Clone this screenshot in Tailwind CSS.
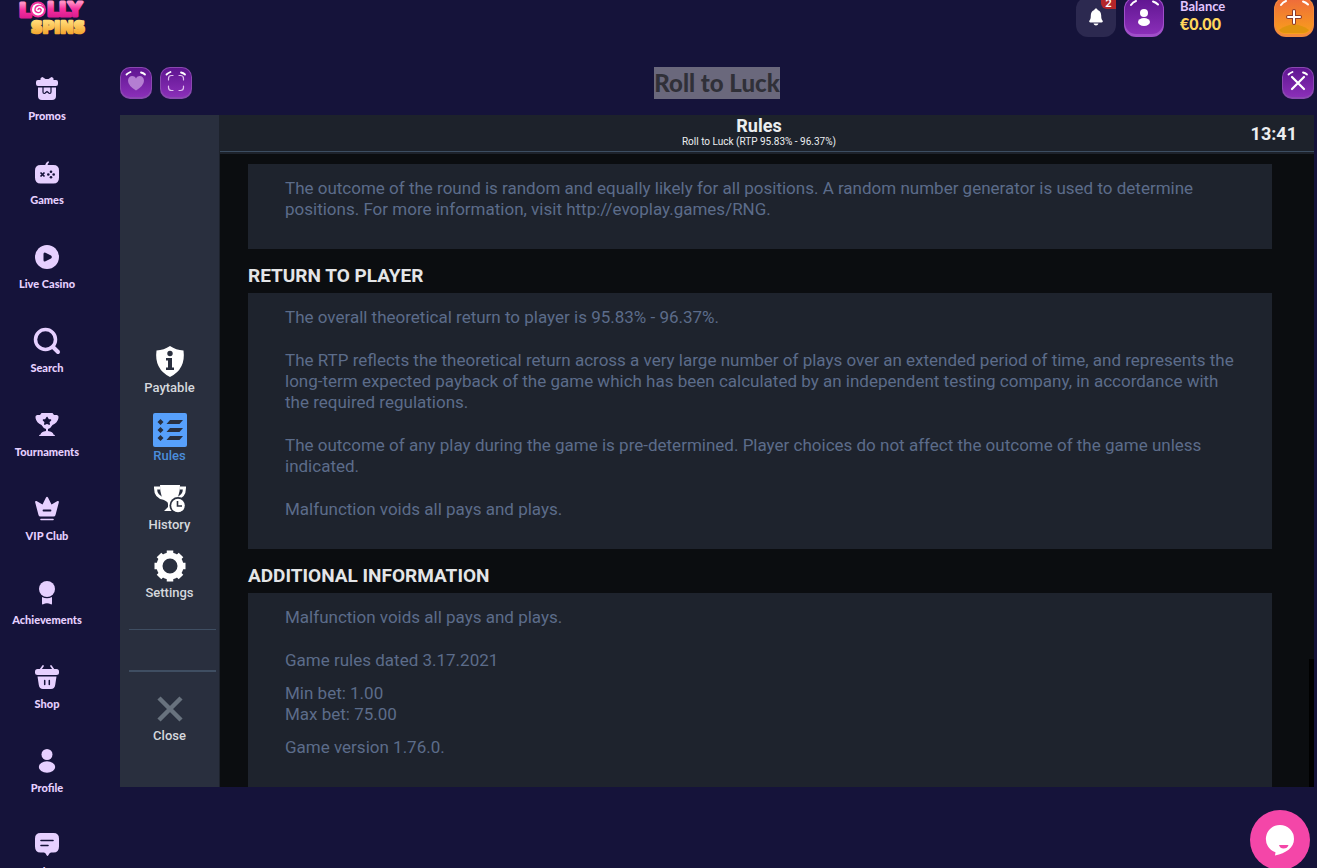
<!DOCTYPE html>
<html lang="en">
<head>
    <meta charset="utf-8">
    <meta name="viewport" content="width=device-width, initial-scale=1">
    <title>Roll to Luck - Lolly Spins</title>
    <script src="https://cdn.jsdelivr.net/npm/@tailwindcss/browser@4"></script>
</head>

<body class="h-screen overflow-hidden flex flex-col bg-[#15133a] text-white font-[Lato,sans-serif]">
    <!-- shared gradients -->
    <svg class="absolute" width="0" height="0" aria-hidden="true">
        <defs>
            <linearGradient id="purple" x1="0" y1="0" x2="0" y2="1">
                <stop offset="0" stop-color="#5f1590" />
                <stop offset="1" stop-color="#8a2fb8" />
            </linearGradient>
            <linearGradient id="orange" x1="0" y1="0" x2="0" y2="1">
                <stop offset="0" stop-color="#ee6a3c" />
                <stop offset="1" stop-color="#f9a01b" />
            </linearGradient>
            <linearGradient id="pink" x1="0" y1="0" x2="0" y2="1">
                <stop offset="0.2" stop-color="#ff8fc4" />
                <stop offset="0.5" stop-color="#f5309f" />
                <stop offset="1" stop-color="#d3158b" />
            </linearGradient>
            <linearGradient id="gold" x1="0" y1="0" x2="0" y2="1">
                <stop offset="0.2" stop-color="#ffd873" />
                <stop offset="1" stop-color="#f09a1e" />
            </linearGradient>
        </defs>
    </svg>

    <!-- top bar -->
    <header class="h-[37px] shrink-0 flex items-end pl-4 pr-[3px]">
        <a href="#" aria-label="Lolly Spins">
            <svg width="72" height="40" viewBox="0 0 72 40" font-family="DejaVu Sans" font-weight="700" stroke-linejoin="round">
                <g fill="url(#pink)" stroke="url(#pink)" stroke-width="3" font-size="19">
                    <text x="3" y="20">L</text>
                    <text x="31" y="19">LLY</text>
                </g>
                <circle cx="22" cy="12.500" r="8" fill="#f0309c" />
                <circle cx="22" cy="12.500" r="6" fill="#fff" />
                <path d="M22 12.500c1-2 4-.5 3 1.500-1.500 3-6.500 1.500-6-2 .6-4 6-5 8.500-1.500" fill="none" stroke="#f0309c" stroke-width="1.400" stroke-linecap="round" />
                <text x="15" y="36" font-size="16" fill="url(#gold)" stroke="url(#gold)" stroke-width="2.500">SPINS</text>
            </svg>
        </a>
        <div class="ml-auto flex items-end gap-2">
            <button class="relative size-10 rounded-xl bg-[#2c2950] flex items-center justify-center" aria-label="Notifications">
                <svg width="16" height="18" viewBox="0 0 16 18" fill="#fff">
                    <path d="M8 .5c.9 0 1.500.6 1.600 1.400 2.400.8 3.600 2.800 3.600 5.600 0 3 .5 4 1.300 5 .7.900.3 2-1 2h-11c-1.300 0-1.700-1.100-1-2 .8-1 1.300-2 1.300-5 0-2.800 1.200-4.800 3.600-5.600C6.500 1.100 7.100.5 8 .5zM5.500 15.500h5c-.4 1.300-1.300 2-2.500 2s-2.100-.7-2.500-2z" />
                </svg>
                <span class="absolute top-0 right-0 w-[15px] h-3 rounded-bl-md bg-[#b3262a] text-[11px] leading-3 font-bold">2</span>
            </button>
            <button aria-label="Account">
                <svg width="40" height="40" viewBox="0 0 40 40">
                    <rect width="40" height="40" rx="12" fill="#a04fc9" />
                    <rect x="1" y="1" width="38" height="36" rx="11" fill="url(#purple)" />
                    <path d="M7 8q2-3 5-4M29 4.500q3 1 5 3" stroke="#fff" stroke-width="2" stroke-linecap="round" fill="none" />
                    <circle cx="20" cy="16" r="4" fill="#fff" />
                    <ellipse cx="20" cy="25" rx="6" ry="4" fill="#fff" />
                </svg>
            </button>
        </div>
        <div class="ml-4 w-[94px] h-10">
            <div class="text-[13px] leading-[18px] font-bold text-[#e3c6ff]">Balance</div>
            <div class="text-base leading-[18px] font-black text-[#ffd65c]">€0.00</div>
        </div>
        <button aria-label="Deposit">
            <svg width="40" height="40" viewBox="0 0 40 40">
                <rect width="40" height="40" rx="12" fill="#f28a3c" />
                <rect x="1" y="1" width="38" height="36" rx="11" fill="url(#orange)" />
                <path d="M5 33q15-11 30 0-2 3-6 3H11q-4 0-6-3z" fill="#e0940f" />
                <path d="M7 8q2-3 5-4M29 4.500q3 1 5 3" stroke="#fff" stroke-width="2" stroke-linecap="round" fill="none" />
                <path d="M20 14v12M14 20h12" stroke="#8d3b2c" stroke-width="4" stroke-linecap="round" />
                <path d="M20 14v12M14 20h12" stroke="#fff" stroke-width="2" stroke-linecap="round" />
            </svg>
        </button>
    </header>

    <div class="flex-1 min-h-0 flex">
        <!-- site menu -->
        <nav class="w-[94px] shrink-0 pt-[38px] text-[11px] leading-4 font-black text-[#e6d0ff] text-center">
            <a href="#" class="h-[84px] flex flex-col items-center gap-[5px]">
                <svg width="28" height="28" viewBox="0 0 28 28" fill="currentColor">
                    <path d="M5 5h2.500q-.5-2.500 2-3l3 2h3l3-2q2.500.5 2 3H23q2 0 2 2v2q0 2-2 2H5q-2 0-2-2V7q0-2 2-2z" />
                    <path d="M5 12.500h18V21q0 4-4 4H9q-4 0-4-4z" />
                    <path d="M10 12v5q0 1.500 1.300 1.500.8 0 1.200-.8l1.500-1.200 1.500 1.200q.4.800 1.200.8Q18 18.500 18 17v-5" fill="none" stroke="#15133a" stroke-width="1.200" />
                </svg>
                Promos
            </a>
            <a href="#" class="h-[84px] flex flex-col items-center gap-[5px]">
                <svg width="28" height="28" viewBox="0 0 28 28" fill="currentColor">
                    <path d="M12 6.500q.5-3 3.300-4.500l.7 1.500Q14.500 4.500 14.500 6.500z" />
                    <path d="M7.500 6h13q5.500 0 5.500 5.500v7q0 6-5.500 6h-13q-5.500 0-5.500-6v-7Q2 6 7.500 6z" />
                    <path d="M7.500 13.500l4 4m0-4l-4 4" stroke="#15133a" stroke-width="1.700" />
                    <g fill="#15133a"><circle cx="18" cy="12.800" r="1.300" /><circle cx="18" cy="18.200" r="1.300" /><circle cx="15.300" cy="15.500" r="1.300" /><circle cx="20.700" cy="15.500" r="1.300" /></g>
                </svg>
                Games
            </a>
            <a href="#" class="h-[84px] flex flex-col items-center gap-[5px]">
                <svg width="28" height="28" viewBox="0 0 28 28" fill="currentColor">
                    <circle cx="14" cy="14" r="12" />
                    <path d="M10.500 11q0-2.200 2-1.300l5.500 2.900q1.700 1.400 0 2.800l-5.500 2.900q-2 .9-2-1.300z" fill="#15133a" />
                </svg>
                Live Casino
            </a>
            <a href="#" class="h-[84px] flex flex-col items-center gap-[5px]">
                <svg width="28" height="28" viewBox="0 0 28 28" fill="none" stroke="currentColor">
                    <circle cx="12.500" cy="12.500" r="10" stroke-width="3.500" />
                    <path d="M20 20l5 5" stroke-width="4" stroke-linecap="round" />
                </svg>
                Search
            </a>
            <a href="#" class="h-[84px] flex flex-col items-center gap-[5px]">
                <svg width="28" height="28" viewBox="0 0 28 28" fill="currentColor">
                    <path d="M8.500 2h11l1.500 2h3q2 .5 1.500 3-1 5-6 7-2 3.500-4.500 4v2q5 .5 5.500 3.500 1.500.2 1.500 1.500H6q0-1.300 1.500-1.500Q8 20.500 13 20v-2q-2.500-.5-4.500-4-5-2-6-7Q2 4.500 4 4h3z" />
                    <path d="M14 6.500l1.200 2.200 2.300.4-1.700 1.700.4 2.400-2.200-1.100-2.200 1.100.4-2.400-1.700-1.700 2.300-.4z" fill="#15133a" stroke="#15133a" stroke-width="1.500" stroke-linejoin="round" />
                </svg>
                Tournaments
            </a>
            <a href="#" class="h-[84px] flex flex-col items-center gap-[5px]">
                <svg width="28" height="28" viewBox="0 0 28 28" fill="currentColor">
                    <path d="M3.500 6l6 3.500 3.500-7q1-1.500 2 0l3.500 7 6-3.500q1.800-.3 1.300 1.500L22.500 20q-.3 1.500-2 1.500h-13q-1.700 0-2-1.500L2.200 7.500Q1.700 5.700 3.500 6z" />
                    <path d="M10.500 15.500h7" stroke="#15133a" stroke-width="1.800" stroke-linecap="round" />
                    <path d="M8 24.500h12" stroke="currentColor" stroke-width="1.600" stroke-linecap="round" />
                </svg>
                VIP Club
            </a>
            <a href="#" class="h-[84px] flex flex-col items-center gap-[5px]">
                <svg width="28" height="28" viewBox="0 0 28 28" fill="currentColor">
                    <circle cx="14" cy="10" r="8" />
                    <path d="M9 18q5 2.500 10 0v6.500q0 1.200-1.200.8-3.800-2-7.600 0-1.200.4-1.200-.8z" />
                </svg>
                Achievements
            </a>
            <a href="#" class="h-[84px] flex flex-col items-center gap-[5px]">
                <svg width="28" height="28" viewBox="0 0 28 28" fill="currentColor">
                    <path d="M7.500 6.500L10 3M20.500 6.500L18 3" stroke="currentColor" stroke-width="1.700" stroke-linecap="round" />
                    <rect x="2" y="6" width="24" height="6" rx="2.500" />
                    <path d="M4.500 13.500h19l-1.300 8.500q-.6 4-4.200 4h-8q-3.600 0-4.200-4z" />
                    <path d="M11.700 17.500v4M16.300 17.500v4" stroke="#15133a" stroke-width="1.500" stroke-linecap="round" />
                </svg>
                Shop
            </a>
            <a href="#" class="h-[84px] flex flex-col items-center gap-[5px]">
                <svg width="28" height="28" viewBox="0 0 28 28" fill="currentColor">
                    <circle cx="14" cy="7.500" r="5.500" />
                    <ellipse cx="14" cy="20" rx="8.200" ry="5.700" />
                </svg>
                Profile
            </a>
            <a href="#" class="h-[84px] flex flex-col items-center gap-[5px]">
                <svg width="28" height="28" viewBox="0 0 28 28" fill="currentColor">
                    <path d="M7.500 2h13Q26 2 26 7.500v8q0 6-5.500 6H18q-1.500 0-2.500 2.500-1 2-2 0-1-2.500-2.500-2.500H7.500q-5.500 0-5.500-6v-8Q2 2 7.500 2z" />
                    <path d="M8 9.500h12M8 14.500h7" stroke="#15133a" stroke-width="1.600" stroke-linecap="round" />
                </svg>
                Inbox
            </a>
        </nav>

        <main class="flex-1 min-w-0 pl-[26px] pr-[3px] pt-[30px]">
            <div class="h-8 flex items-center justify-between">
                <div class="flex gap-2 w-[72px]">
                    <button aria-label="Add to favourites">
                        <svg width="32" height="32" viewBox="0 0 32 32">
                            <rect width="32" height="32" rx="10" fill="#8a48b0" />
                            <rect x="1" y="1" width="30" height="29" rx="9" fill="url(#purple)" />
                            <path d="M6.500 7.500q1.500-1.500 4-2.500M21 5.500q2.500.5 4 2" stroke="#fff" stroke-width="1.800" stroke-linecap="round" fill="none" />
                            <path d="M16 23.500q-8-5-8-9.800C8 8.500 14 7.500 16 11.500c2-4 8-3 8 2.200q0 4.800-8 9.800z" fill="#b47ed2" />
                        </svg>
                    </button>
                    <button aria-label="Full screen">
                        <svg width="32" height="32" viewBox="0 0 32 32" fill="none" stroke-linecap="round">
                            <rect width="32" height="32" rx="10" fill="#8a48b0" />
                            <rect x="1" y="1" width="30" height="29" rx="9" fill="url(#purple)" />
                            <path d="M6.500 7.500q1.500-1.500 4-2.500M21 5.500q2.500.5 4 2" stroke="#fff" stroke-width="1.800" />
                            <path d="M8.500 13v-1.500q0-3 3-3H13M19 8.500h1.500q3 0 3 3V13M23.500 19v1.500q0 3-3 3H19M13 23.500h-1.500q-3 0-3-3V19" stroke="#dfc0ee" stroke-width="1.200" />
                        </svg>
                    </button>
                </div>
                <h1 class="bg-[#6a687c] text-[#303038] text-2xl font-black">Roll to Luck</h1>
                <div class="w-[72px] text-right">
                    <button aria-label="Close game" class="align-top">
                        <svg width="32" height="32" viewBox="0 0 32 32" fill="none" stroke-linecap="round">
                            <rect width="32" height="32" rx="10" fill="#8a48b0" />
                            <rect x="1" y="1" width="30" height="29" rx="9" fill="url(#purple)" />
                            <path d="M6.500 7.500q1.500-1.500 4-2.500M21 5.500q2.500.5 4 2" stroke="#fff" stroke-width="1.800" />
                            <path d="M10 10l12 12M22 10L10 22" stroke="#fff" stroke-width="2.200" />
                        </svg>
                    </button>
                </div>
            </div>

            <!-- game window -->
            <div class="mt-4 h-[672px] flex bg-[#0b0d10] overflow-hidden font-[Roboto,sans-serif]">
                <aside class="w-[100px] shrink-0 bg-[#292f3e] border-r border-[#1d222c] pt-[228px] text-[13px] leading-[18px] font-medium text-[#d5d8dd]">
                    <button class="w-full h-[68px] flex flex-col items-center">
                        <svg width="36" height="36" viewBox="0 0 36 36">
                            <path d="M18 3q6 4 13.500 4.500Q34 26 18 34 2 26 4.500 7.500 12 7 18 3z" fill="#fff" />
                            <circle cx="18" cy="10.500" r="2.700" fill="#292f3e" />
                            <path d="M14 15h6v9.500h2V27h-8v-2.500h2V17.500h-2z" fill="#292f3e" />
                        </svg>
                        Paytable
                    </button>
                    <button class="w-full h-[69px] flex flex-col items-center text-[#4b8ddb]">
                        <svg width="36" height="36" viewBox="0 0 36 36">
                            <rect x="1" y="2" width="34" height="34" rx="2" fill="#57a0fb" />
                            <g fill="#292f3e">
                                <path d="M8.500 8l3 3-3 3-3-3zM8.500 16l3 3-3 3-3-3zM8.500 24l3 3-3 3-3-3z" />
                                <path d="M18 9h13l-3.500 4h-13zM18 17h13l-3.500 4h-13zM18 25h13l-3.500 4h-13z" />
                            </g>
                        </svg>
                        Rules
                    </button>
                    <button class="w-full h-[68px] flex flex-col items-center">
                        <svg width="36" height="36" viewBox="0 0 36 36">
                            <path d="M8 5h20q0 14-7 16.500-1.500.5-1.500 2.500v3l4 4H12l4-4v-3q0-2-1.500-2.500Q8 19 8 5z" fill="#fff" />
                            <path d="M8.500 8H3.500q0 9.500 9 10.500M27.500 8h5q0 9.500-9 10.500" fill="none" stroke="#fff" stroke-width="3" />
                            <circle cx="26" cy="25.500" r="8.500" fill="#292f3e" />
                            <circle cx="26" cy="25.500" r="6.800" fill="#fff" />
                            <path d="M25.500 21v5h4.500" fill="none" stroke="#292f3e" stroke-width="1.600" />
                        </svg>
                        History
                    </button>
                    <button class="w-full h-[68px] flex flex-col items-center">
                        <svg width="36" height="36" viewBox="0 0 36 36">
                            <g fill="none" stroke="#fff">
                                <circle cx="18" cy="18" r="10.500" stroke-width="6" />
                                <path d="M18 2.500v5M18 28.500v5M2.500 18h5M28.500 18h5M7 7l3.500 3.500M25.500 25.500L29 29M29 7l-3.500 3.500M10.500 25.500L7 29" stroke-width="6.500" />
                            </g>
                        </svg>
                        Settings
                    </button>
                    <div class="mt-[13px] ml-[9px] mr-[3px] h-[43px] border-t border-b-2 border-[#3f4e62]"></div>
                    <button class="mt-[19px] w-full flex flex-col items-center">
                        <svg width="36" height="36" viewBox="0 0 36 36" stroke="#68727e" stroke-width="4.500">
                            <path d="M7 7l22 22M29 7L7 29" />
                        </svg>
                        Close
                    </button>
                </aside>

                <section class="flex-1 min-w-0 flex flex-col">
                    <div class="relative h-[39px] shrink-0 bg-[#1d222b] text-center text-[#eceef0]">
                        <div class="h-[37px] border-b border-[#3c4d61]">
                            <h2 class="text-lg leading-[21px] font-bold pr-4">Rules</h2>
                            <p class="text-[10px] leading-[11px] pr-4">Roll to Luck (RTP 95.83% - 96.37%)</p>
                        </div>
                        <time class="absolute right-[17px] top-[7px] text-lg leading-6 font-bold">13:41</time>
                    </div>
                    <div class="flex-1 min-h-0 flex">
                        <div class="flex-1 min-w-0 pl-7 pr-[37px] pt-[10px] text-[17px] leading-[21px] text-[#5c6c8a]">
                            <div class="h-[85px] bg-[#1e232d] pl-[37px] pr-4 pt-[14px]">
                                <p>The outcome of the round is random and equally likely for all positions. A random number generator is used to determine<br>positions. For more information, visit http://evoplay.games/RNG.</p>
                            </div>
                            <h3 class="h-11 pt-4 text-[19px] leading-[22px] font-bold text-[#e4e5e7]">RETURN TO PLAYER</h3>
                            <div class="h-64 bg-[#1e232d] pl-[37px] pr-4 pt-[14px] space-y-[22px]">
                                <p>The overall theoretical return to player is 95.83% - 96.37%.</p>
                                <p>The RTP reflects the theoretical return across a very large number of plays over an extended period of time, and represents the<br>long-term expected payback of the game which has been calculated by an independent testing company, in accordance with<br>the required regulations.</p>
                                <p>The outcome of any play during the game is pre-determined. Player choices do not affect the outcome of the game unless<br>indicated.</p>
                                <p>Malfunction voids all pays and plays.</p>
                            </div>
                            <h3 class="h-11 pt-4 text-[19px] leading-[22px] font-bold text-[#e4e5e7]">ADDITIONAL INFORMATION</h3>
                            <div class="h-[194px] bg-[#1e232d] pl-[37px] pr-4 pt-[14px]">
                                <p>Malfunction voids all pays and plays.</p>
                                <p class="mt-[22px]">Game rules dated 3.17.2021</p>
                                <p class="mt-3">Min bet: 1.00<br>Max bet: 75.00</p>
                                <p class="mt-3">Game version 1.76.0.</p>
                            </div>
                        </div>
                        <!-- scroll thumb -->
                        <div class="w-[5px] h-32 self-end bg-black"></div>
                    </div>
                </section>
            </div>
        </main>
    </div>

    <button class="fixed right-[7px] bottom-[-2px] size-[60px] rounded-full bg-[#f446a8] flex items-center justify-center" aria-label="Open chat">
        <svg width="30" height="32" viewBox="0 0 30 32">
            <path d="M15 1a14 14 0 0 1 14 14c0 9-8 14-19 16.500l.5-3.200A14 14 0 0 1 15 1z" fill="#fff" />
            <path d="M14 21h9.500q-1 3.500-5 3.500-3.500 0-4.500-3.500z" fill="#f446a8" />
        </svg>
    </button>
</body>
</html>
